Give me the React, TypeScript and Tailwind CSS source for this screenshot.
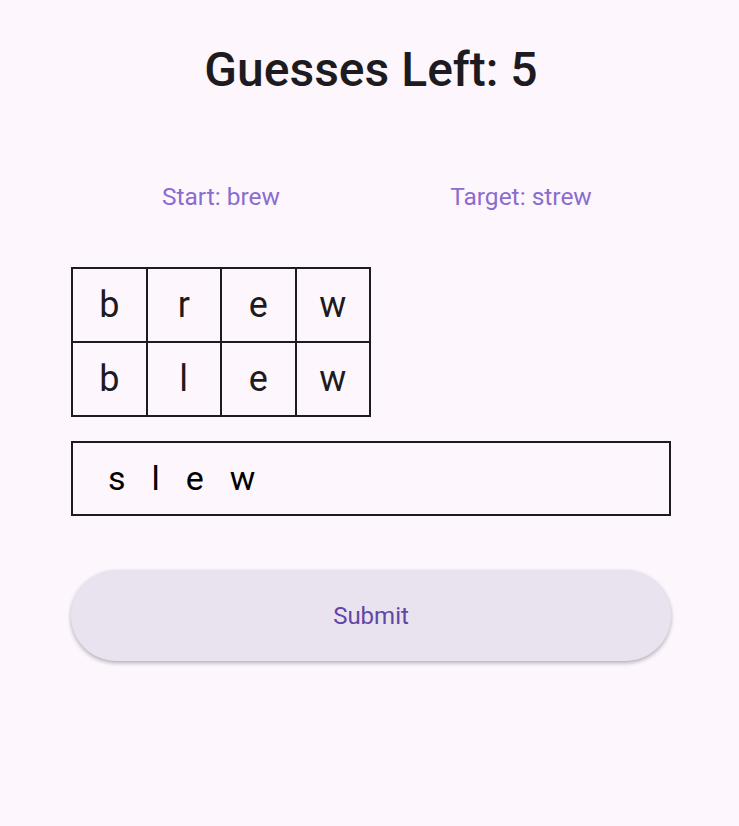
const rows = [
  ["b", "r", "e", "w"],
  ["b", "l", "e", "w"],
];

export default function App() {
  return (
    <div className="min-h-screen bg-[#fdf7fd] font-['Roboto',sans-serif] text-[#1d1b20]">
      <div className="ml-[71px] flex w-[600px] flex-col">
        <h1 className="mt-[40px] text-center text-[48px] leading-[60px] font-medium">
          Guesses Left: 5
        </h1>
        <div className="mt-[81px] grid grid-cols-2 text-center text-[24.5px] leading-[32px] text-[#8b6ccf]">
          <span>Start: brew</span>
          <span>Target: strew</span>
        </div>
        <div className="mt-[54px] w-[300px] border border-[#1d1b20]">
          {rows.map((row, i) => (
            <div key={i} className="flex">
              {row.map((ch, j) => (
                <div
                  key={j}
                  className="flex h-[74px] w-[75px] items-center justify-center border border-[#1d1b20] text-[36px]"
                >
                  {ch}
                </div>
              ))}
            </div>
          ))}
        </div>
        <div className="mt-[24px] flex h-[75px] items-center border-2 border-[#1d1b20] pl-[35px] text-[34px] tracking-[26px] text-black">
          slew
        </div>
        <button className="mt-[54px] h-[91px] rounded-full bg-[#e9e3f0] text-[24px] text-[#6146a5] shadow-[0_2px_4px_rgba(0,0,0,0.3)]">
          Submit
        </button>
      </div>
    </div>
  );
}
